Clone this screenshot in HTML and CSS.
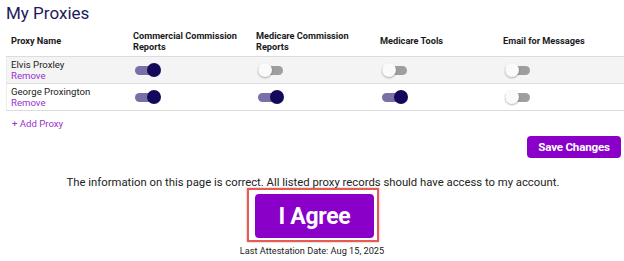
FILE: index.html
```html
<!DOCTYPE html>
<html lang="en">
<head>
<meta charset="utf-8">
<title>My Proxies</title>
<link rel="stylesheet" href="styles.css">
</head>
<body>
<h1 class="title">My Proxies</h1>
<div class="table">
  <div class="row head">
    <div class="cell">Proxy Name</div>
    <div class="cell">Commercial Commission<br>Reports</div>
    <div class="cell">Medicare Commission<br>Reports</div>
    <div class="cell">Medicare Tools</div>
    <div class="cell">Email for Messages</div>
  </div>
  <div class="row alt">
    <div class="cell name">Elvis Proxley<br><a class="link">Remove</a></div>
    <div class="cell"><span class="toggle on"><span class="knob"></span></span></div>
    <div class="cell"><span class="toggle"><span class="knob"></span></span></div>
    <div class="cell"><span class="toggle"><span class="knob"></span></span></div>
    <div class="cell"><span class="toggle"><span class="knob"></span></span></div>
  </div>
  <div class="row">
    <div class="cell name">George Proxington<br><a class="link">Remove</a></div>
    <div class="cell"><span class="toggle on"><span class="knob"></span></span></div>
    <div class="cell"><span class="toggle on"><span class="knob"></span></span></div>
    <div class="cell"><span class="toggle on"><span class="knob"></span></span></div>
    <div class="cell"><span class="toggle"><span class="knob"></span></span></div>
  </div>
</div>
<a class="add link">+ Add Proxy</a>
<div class="actions"><button class="btn save">Save Changes</button></div>
<p class="statement">The information on this page is correct. All listed proxy records should have access to my account.</p>
<div class="agree-row"><div class="highlight"><button class="btn agree">I Agree</button></div></div>
<p class="last">Last Attestation Date: Aug 15, 2025</p>
</body>
</html>
```
FILE: styles.css
```css
* { box-sizing: border-box; }
body {
  margin: 0;
  background: #fff;
  font-family: Roboto, "Liberation Sans", Arial, sans-serif;
  color: #222;
  width: 624px;
  overflow: hidden;
}
.title {
  margin: 0;
  padding: 2px 0 0 6px;
  font-size: 17px;
  line-height: 22px;
  font-weight: 400;
  color: #1d1a5c;
  height: 25px;
}
.table {
  margin-left: 6px;
}
.row {
  display: grid;
  grid-template-columns: 122px 123px 124px 123px 1fr;
  height: 27px;
  border-bottom: 1px solid #dcdcdc;
  border-left: 1px solid #ececec;
  align-items: center;
}
.row.head {
  height: 32px;
  border-left: none;
  font-weight: 700;
  font-size: 9.2px;
  line-height: 11px;
  color: #1a1a1a;
}
.row.alt { background: #f4f4f4; }
.cell {
  padding-left: 5px;
}
.name {
  font-size: 9.6px;
  line-height: 11.5px;
  color: #222;
  padding-left: 4px;
}
.link {
  color: #9933cc;
  text-decoration: none;
}
.toggle {
  position: relative;
  display: block;
  width: 26px;
  height: 14px;
  margin-left: 1px;
}
.toggle::before {
  content: "";
  position: absolute;
  left: 0;
  right: 1px;
  top: 3px;
  height: 9px;
  border-radius: 5px;
  background: #9e9e9e;
}
.toggle.on::before { background: #7a6fa6; }
.knob {
  position: absolute;
  top: 0;
  left: 0;
  width: 14px;
  height: 14px;
  border-radius: 50%;
  background: #fafafa;
  box-shadow: 0 1px 2px rgba(0,0,0,0.3);
}
.toggle.on .knob {
  left: auto;
  right: 0;
  background: #13095a;
  box-shadow: none;
}
.add {
  display: block;
  margin: 7px 0 0 12px;
  font-size: 9.6px;
  line-height: 12px;
  height: 12px;
}
.actions {
  display: flex;
  justify-content: flex-end;
  padding-right: 3px;
  margin-top: 6px;
}
.btn {
  border: none;
  background: #8a00c9;
  color: #fff;
  font-family: Roboto, "Liberation Sans", Arial, sans-serif;
  font-weight: 700;
  border-radius: 4px;
  padding: 0;
}
.save {
  width: 94px;
  height: 22px;
  font-size: 11.6px;
  letter-spacing: -0.2px;
}
.statement {
  margin: 18px 0 0;
  text-align: center;
  font-size: 11.3px;
  line-height: 14px;
  color: #222;
  padding-left: 2px;
}
.agree-row {
  display: flex;
  justify-content: flex-start;
  padding-left: 247px;
  margin-top: -2px;
}
.highlight {
  border: 2px solid #ea5a52;
  padding: 4px 3px 2px 6px;
  box-shadow: 0 0 2px rgba(0,0,0,0.35);
}
.agree {
  display: block;
  width: 119px;
  height: 44px;
  font-size: 23px;
  letter-spacing: -0.3px;
}
.last {
  margin: 3px 0 0;
  text-align: center;
  font-size: 9.2px;
  line-height: 11px;
  color: #222;
}
```
